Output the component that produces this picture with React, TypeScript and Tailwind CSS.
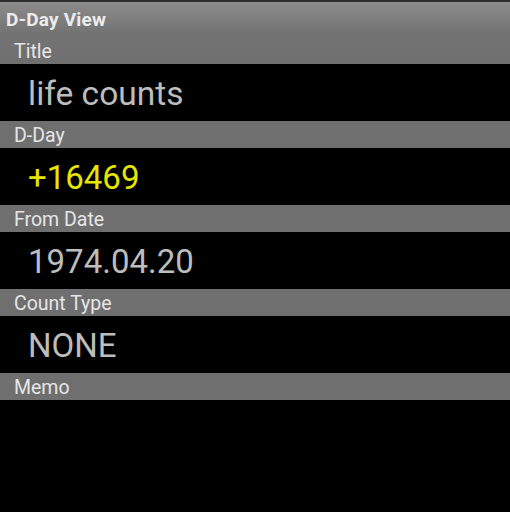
import React from "react";

interface Field {
  label: string;
  value: string;
  highlight?: boolean;
}

const fields: Field[] = [
  { label: "Title", value: "life counts" },
  { label: "D-Day", value: "+16469", highlight: true },
  { label: "From Date", value: "1974.04.20" },
  { label: "Count Type", value: "NONE" },
];

export default function App() {
  return (
    <div
      className="h-[512px] w-[510px] overflow-hidden bg-black"
      style={{ fontFamily: "Roboto, 'Noto Sans', sans-serif" }}
    >
      {/* header + first label share one gradient */}
      <div className="border-t-2 border-[#2e2e2e] bg-gradient-to-b from-[#8c8c8c] via-[#737373] via-50% to-[#6f6f6f]">
        <div className="flex h-9 items-center pl-[6px] pt-[1px] text-[19px] font-bold tracking-[0.2px] text-[#ececec]">
          D-Day View
        </div>
        <div className="flex h-[26px] items-center pl-[14px] pt-[2px] text-[19.5px] text-[#e6e6e6]">
          {fields[0].label}
        </div>
      </div>
      <div className="flex h-[57px] items-center pl-[28px] pt-[3px] text-[33.5px] text-[#bdbdbd]">
        {fields[0].value}
      </div>

      {fields.slice(1).map((f) => (
        <div key={f.label}>
          <div className="flex h-[27px] items-center bg-[#6f6f6f] pl-[14px] pt-[2px] text-[19.5px] text-[#e6e6e6]">
            {f.label}
          </div>
          <div
            className={
              "flex h-[57px] items-center pl-[28px] pt-[2px] text-[33px] " +
              (f.highlight ? "text-[#e6e600]" : "text-[#bdbdbd]")
            }
          >
            {f.value}
          </div>
        </div>
      ))}

      <div className="flex h-[27px] items-center bg-[#6f6f6f] pl-[14px] pt-[2px] text-[19.5px] text-[#e6e6e6]">
        Memo
      </div>
    </div>
  );
}
